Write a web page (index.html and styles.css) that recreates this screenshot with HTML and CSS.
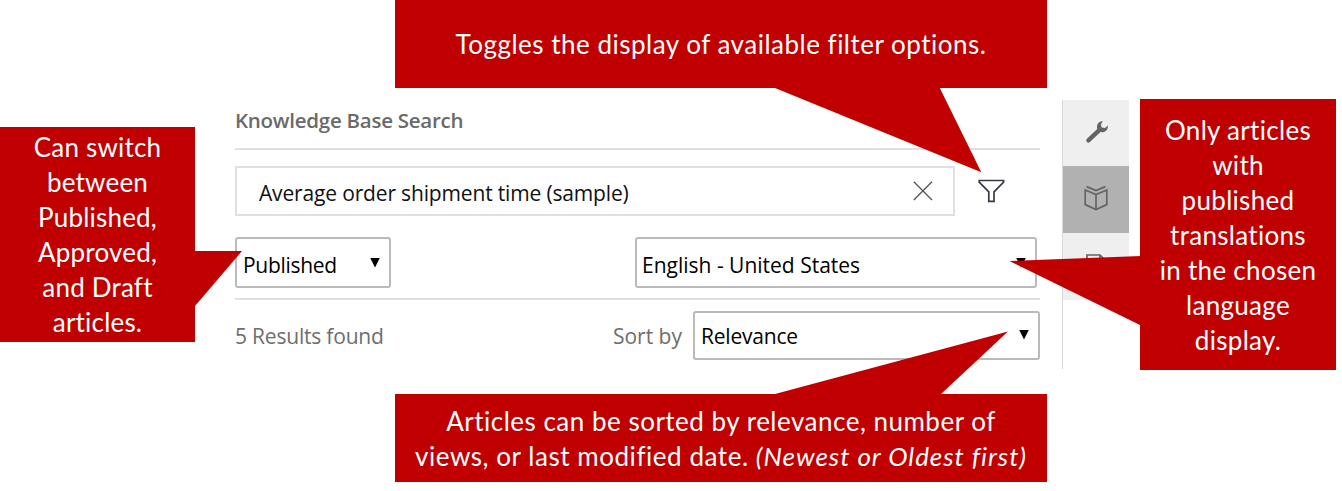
FILE: index.html
```html
<!DOCTYPE html>
<html lang="en">
<head>
<meta charset="utf-8">
<title>Knowledge Base Search</title>
<link rel="stylesheet" href="styles.css">
</head>
<body>
<div class="stage">
  <main class="panel">
    <h1 class="heading"><span class="t-heading">Knowledge Base Search</span></h1>
    <div class="search-row">
      <div class="search-box">
        <span class="t-query">Average order shipment time (sample)</span>
        <svg class="clear" width="20" height="20" viewBox="0 0 20 20"><path d="M0.8 0.8L19 19M19 0.8L0.8 19"/></svg>
      </div>
      <svg class="funnel" width="27" height="24" viewBox="0 0 27 24"><path d="M1.2 1.5H25.6V3.2L16 12.8V22.4H10.8V12.8L1.2 3.2Z"/></svg>
    </div>
    <div class="filter-row">
      <div class="select select-status"><span class="t-status">Published</span><i class="caret"></i></div>
      <div class="select select-lang"><span class="t-lang">English - United States</span><i class="caret"></i></div>
    </div>
    <div class="result-row">
      <span class="muted t-count">5 Results found</span>
      <span class="muted t-sort">Sort by</span>
      <div class="select select-sort"><span class="t-rel">Relevance</span><i class="caret"></i></div>
    </div>
  </main>
  <nav class="rail">
    <div class="tile tile-first"><svg width="24" height="24" viewBox="0 0 24 24"><path class="wrench-handle" d="M3.4 20.4L14 10.4"/><path class="wrench-head" d="M17.8 1L15.8 4.8L16.8 7.6L20 8L22.8 5.6C23.2 9.2 21.2 12 17.8 12.3C14.4 12.6 11.6 10.2 12 6.6C12.3 3.2 14.8 1.2 17.8 1Z"/></svg></div>
    <div class="tile tile-active"><svg width="26" height="28" viewBox="0 0 26 28"><path class="line" d="M2.2 6L13 10.6L23.8 6V20.6L13 25.6L2.2 20.6ZM13 10.6V25.6M3.6 2.6L13 6.6L22.4 2.6"/></svg></div>
    <div class="tile"><svg width="22" height="24" viewBox="0 0 22 24"><path class="line" d="M2 22V2H15L20 7V22ZM15 2V7H20"/></svg></div>
  </nav>
</div>
<svg class="tails" width="1342" height="491" viewBox="0 0 1342 491">
  <path d="M775 87H939.3L981.3 172.3L775 88Z"/>
  <path d="M194 251H242L195 306H194Z"/>
  <path d="M1141 256L1009.5 261L1140 325H1141Z"/>
  <path d="M775 395V394L1008 331.5L941 394V395Z"/>
</svg>
<div class="callout callout-top"><span>Toggles the display of available filter options.</span></div>
<div class="callout callout-left"><span>Can switch</span><span>between</span><span>Published,</span><span>Approved,</span><span>and Draft</span><span>articles.</span></div>
<div class="callout callout-right"><span>Only articles</span><span>with</span><span>published</span><span>translations</span><span>in the chosen</span><span>language</span><span>display.</span></div>
<div class="callout callout-bottom"><span>Articles can be sorted by relevance, number of</span><span><span class="wide">views, or last modified date. </span><em>(Newest or Oldest first)</em></span></div>
</body>
</html>
```
FILE: styles.css
```css
* { box-sizing: border-box; }
body { margin: 0; width: 1342px; height: 491px; overflow: hidden; background: #fff; font-family: "Open Sans", "Noto Sans", sans-serif; }
.stage { display: flex; padding: 100px 0 0 235px; }
.panel { width: 805px; }
.heading { height: 50px; margin: 0; border-bottom: 2px solid #e0e0e0; font-size: 20.5px; line-height: 41px; font-weight: 600; color: #6a6a6a; }
.search-row { display: flex; align-items: center; margin-top: 16px; height: 50px; }
.search-box { display: flex; align-items: center; justify-content: space-between; width: 720px; height: 50px; padding: 3px 20px 0 22px; border: 2px solid #e0e0e0; font-size: 21px; color: #111; }
.clear { margin-top: -3px; fill: none; stroke: #555; stroke-width: 1.3; }
.funnel { margin-left: 23px; fill: none; stroke: #3d3648; stroke-width: 1.7; }
.filter-row { display: flex; justify-content: space-between; height: 63px; margin-top: 21px; padding-right: 3px; border-bottom: 2px solid #e0e0e0; }
.select { display: flex; align-items: center; justify-content: space-between; height: 51px; padding: 4px 9px 0 6px; border: 2px solid #bababa; border-radius: 3px; font-size: 21px; color: #000; }
.select-status { width: 156px; }
.select-lang { width: 402px; padding-left: 5px; }
.select-sort { width: 347px; height: 49px; padding-top: 1px; }
.caret { width: 10px; height: 10px; margin-top: -4px; background: #000; clip-path: polygon(0 0, 100% 0, 50% 100%); }
.select-sort .caret { margin-top: -3px; }
.result-row { display: flex; align-items: center; height: 49px; margin-top: 11px; font-size: 21px; }
.muted { padding-top: 1px; color: #6e6e6e; }
.t-heading { letter-spacing: -0.26px; }
.t-query { letter-spacing: -0.16px; }
.t-status { letter-spacing: -0.3px; }
.t-count { letter-spacing: -0.2px; }
.t-rel { letter-spacing: -0.2px; }
.t-sort { margin-left: auto; margin-right: 11px; }
span { white-space: nowrap; }
.rail { width: 67px; height: 269px; margin-left: 22px; border-left: 1.5px solid #d9d9d9; }
.tile { display: flex; align-items: center; justify-content: center; height: 67px; padding-bottom: 3px; background: #efefef; }
.tile-first { height: 66px; padding-left: 2px; }
.tile-active { padding-bottom: 3px; background: #b1b1b1; }
.tile svg { fill: none; stroke: #646464; }
.line { stroke-width: 1.7; }
.wrench-handle { stroke-width: 4.4; stroke-linecap: round; }
.wrench-head { fill: #646464; stroke: none; }
.tails { position: absolute; left: 0; top: 0; fill: #c00000; }
.callout { position: absolute; display: flex; flex-direction: column; align-items: center; justify-content: center; padding-top: 1px; background: #c00000; color: #fff; font-family: Lato, sans-serif; font-size: 26px; line-height: 35px; letter-spacing: 0.3px; }
.callout-top { left: 395px; top: 0; width: 652px; height: 88px; padding-top: 0; letter-spacing: 0.5px; }
.callout-left { left: 0; top: 127px; width: 195px; height: 215px; letter-spacing: 0.2px; }
.callout-right { left: 1140px; top: 99px; width: 196px; height: 271px; }
.callout-bottom { left: 395px; top: 394px; width: 652px; height: 88px; letter-spacing: 0.5px; }
.wide { letter-spacing: 0.55px; white-space: pre; }
.callout em { letter-spacing: 0.95px; }
```
